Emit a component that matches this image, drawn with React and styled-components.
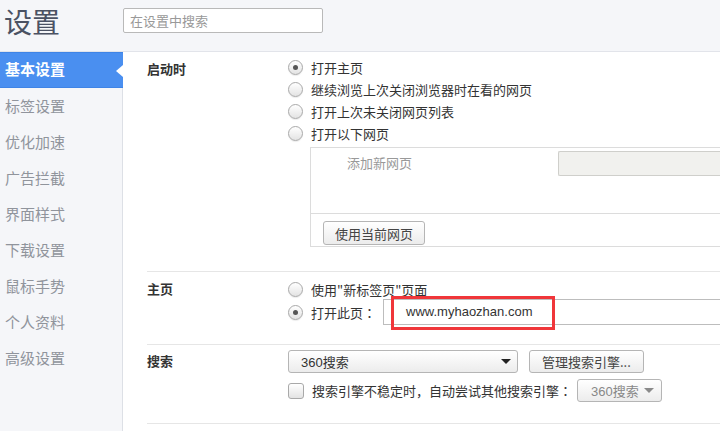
import React from "react";
import styled, { createGlobalStyle, css } from "styled-components";

const Global = createGlobalStyle`
  html, body { margin: 0; padding: 0; background: #fff; }
  body { font-family: "Noto Sans CJK SC", "Noto Sans", sans-serif; font-size: 13px; color: #333; }
  * { box-sizing: border-box; }
`;

const Page = styled.div`
  width: 720px;
  height: 431px;
  overflow: hidden;
  display: flex;
  flex-direction: column;
`;

const Header = styled.header`
  height: 52px;
  flex: none;
  background: #f5f6f9;
  border-bottom: 1px solid #e2e4ea;
  display: flex;
  align-items: flex-start;
`;

const Title = styled.h1`
  margin: 0;
  width: 123px;
  padding: 3px 0 0 4px;
  font-size: 28px;
  line-height: 36px;
  font-weight: 400;
  color: #4b5263;
`;

const Search = styled.input`
  margin-top: 8px;
  width: 200px;
  height: 25px;
  border: 1px solid #b9b9b9;
  border-radius: 2px;
  padding: 0 6px;
  font: inherit;
  font-size: 13px;
  background: #fff;
  outline: none;
  &::placeholder { color: #999; }
`;

const Body = styled.div`
  flex: 1;
  display: flex;
  min-height: 0;
`;

const Sidebar = styled.nav`
  width: 123px;
  flex: none;
  background: #f5f6f9;
  border-right: 1px solid #dde0e6;
  display: flex;
  flex-direction: column;
`;

const NavItem = styled.div`
  position: relative;
  height: 36px;
  line-height: 36px;
  padding-left: 5px;
  font-size: 15px;
  color: #90949c;
  ${(p) =>
    p.$active &&
    css`
      margin-right: -1px;
      background: #4a8ff0;
      border-top: 1px solid #3f84e6;
      border-bottom: 1px solid #3f84e6;
      line-height: 32px;
      color: #fff;
      font-weight: 700;
      &::after {
        content: "";
        position: absolute;
        right: 0;
        top: 12px;
        border-style: solid;
        border-width: 6px 7px 6px 0;
        border-color: transparent #fff transparent transparent;
      }
    `}
`;

const Content = styled.main`
  flex: 1;
  background: #fff;
  padding-left: 24px;
  min-width: 0;
  overflow: hidden;
`;

const Section = styled.section`
  display: grid;
  grid-template-columns: 141px 1fr;
  border-bottom: 1px solid #e6e6e6;
  padding: ${(p) => p.$pad};
`;

const Label = styled.div`
  font-weight: 700;
  font-size: 13px;
  color: #333;
  line-height: 20px;
  margin-top: ${(p) => p.$top || 0}px;
`;

const Options = styled.div`
  display: flex;
  flex-direction: column;
  gap: ${(p) => p.$gap || 0}px;
  min-width: 0;
`;

const OptionRow = styled.div`
  display: flex;
  align-items: center;
  height: ${(p) => p.$h || 22}px;
  white-space: nowrap;
  color: #333;
`;

const Radio = styled.span`
  width: 15px;
  height: 15px;
  flex: none;
  border-radius: 50%;
  border: 1px solid #a9a9a9;
  background: linear-gradient(#ffffff, #e3e3e3);
  box-shadow: 0 1px 1px rgba(0, 0, 0, 0.08);
  margin-right: 8px;
  display: flex;
  align-items: center;
  justify-content: center;
  &::after {
    content: "";
    width: 5px;
    height: 5px;
    border-radius: 50%;
    background: ${(p) => (p.$checked ? "#555" : "transparent")};
  }
`;

const Check = styled.span`
  width: 16px;
  height: 16px;
  flex: none;
  border-radius: 3px;
  border: 1px solid #a9a9a9;
  background: linear-gradient(#ffffff, #e3e3e3);
  margin-right: 8px;
`;

const Colon = styled.span`
  font-family: "Noto Sans CJK TC", "Noto Sans CJK SC", sans-serif;
`;

const PagesBox = styled.div`
  margin: 3px 0 0 22px;
  width: 420px;
  border: 1px solid #dcdcdc;
  border-right: none;
`;

const PagesTop = styled.div`
  height: 65px;
  display: grid;
  grid-template-columns: 247px 1fr;
  align-items: start;
  padding-top: 3px;
`;

const PagesHint = styled.div`
  padding-left: 36px;
  line-height: 24px;
  color: #999;
`;

const GreyInput = styled.div`
  height: 25px;
  background: #f1f1ee;
  border: 1px solid #cfcfcb;
  border-right: none;
  border-radius: 2px 0 0 2px;
`;

const PagesBottom = styled.div`
  border-top: 1px solid #dcdcdc;
  padding: 7px 12px 1px;
  height: 33px;
`;

const Button = styled.button`
  height: ${(p) => p.$h || 24}px;
  padding: 0 ${(p) => p.$px || 12}px;
  border: 1px solid #b5b5b5;
  border-radius: 3px;
  background: linear-gradient(#ffffff, #ececec);
  font: inherit;
  font-size: 13px;
  color: #444;
  white-space: nowrap;
  margin-left: ${(p) => p.$ml || 0}px;
  cursor: pointer;
`;

const UrlWrap = styled.div`
  position: relative;
  margin-left: 7px;
  flex: 1;
  height: 26px;
`;

const UrlInput = styled.div`
  height: 26px;
  border: 1px solid #bdbdbd;
  border-right: none;
  padding-left: 22px;
  line-height: 24px;
  font-family: "Liberation Sans", Arial, sans-serif;
  font-size: 13px;
  color: #333;
`;

const Highlight = styled.div`
  position: absolute;
  left: 8px;
  top: -3px;
  width: 164px;
  height: 34px;
  border: 3px solid #f0363a;
  pointer-events: none;
`;

const Select = styled.div`
  width: ${(p) => p.$w}px;
  height: ${(p) => p.$h || 23}px;
  border: 1px solid #b5b5b5;
  border-radius: 3px;
  background: linear-gradient(#ffffff, #ececec);
  display: flex;
  align-items: center;
  justify-content: space-between;
  padding: 0 ${(p) => p.$pr || 6}px 0 ${(p) => p.$pl || 12}px;
  color: ${(p) => (p.$muted ? "#888" : "#333")};
  margin-left: ${(p) => p.$ml || 0}px;
  white-space: nowrap;
`;

const Arrow = styled.span`
  width: 0;
  height: 0;
  border-style: solid;
  border-width: 5px 5px 0 5px;
  border-color: ${(p) => (p.$muted ? "#8a8a8a" : "#222")} transparent transparent transparent;
`;

const Num = styled.span`
  font-family: "Liberation Sans", Arial, sans-serif;
`;

const navItems = ["基本设置", "标签设置", "优化加速", "广告拦截", "界面样式", "下载设置", "鼠标手势", "个人资料", "高级设置"];

export default function App() {
  return (
    <Page>
      <Global />
      <Header>
        <Title>设置</Title>
        <Search placeholder="在设置中搜索" />
      </Header>
      <Body>
        <Sidebar>
          {navItems.map((t, i) => (
            <NavItem key={t} $active={i === 0}>
              {t}
            </NavItem>
          ))}
        </Sidebar>
        <Content>
          <Section $pad="4px 0 24px">
            <Label $top={3}>启动时</Label>
            <Options>
              <OptionRow>
                <Radio $checked />
                打开主页
              </OptionRow>
              <OptionRow>
                <Radio />
                继续浏览上次关闭浏览器时在看的网页
              </OptionRow>
              <OptionRow>
                <Radio />
                打开上次未关闭网页列表
              </OptionRow>
              <OptionRow>
                <Radio />
                打开以下网页
              </OptionRow>
              <PagesBox>
                <PagesTop>
                  <PagesHint>添加新网页</PagesHint>
                  <GreyInput />
                </PagesTop>
                <PagesBottom>
                  <Button $px={11}>使用当前网页</Button>
                </PagesBottom>
              </PagesBox>
            </Options>
          </Section>
          <Section $pad="7px 0 19px">
            <Label $top={0}>主页</Label>
            <Options>
              <OptionRow $h={20}>
                <Radio />
                使用"新标签页"页面
              </OptionRow>
              <OptionRow $h={26}>
                <Radio $checked />
                打开此页<Colon>：</Colon>
                <UrlWrap>
                  <UrlInput>www.myhaozhan.com</UrlInput>
                  <Highlight />
                </UrlWrap>
              </OptionRow>
            </Options>
          </Section>
          <Section $pad="5px 0 21px">
            <Label $top={1}>搜索</Label>
            <Options $gap={6}>
              <OptionRow $h={23}>
                <Select $w={230}>
                  <span>
                    <Num>360</Num>搜索
                  </span>
                  <Arrow />
                </Select>
                <Button $h={23} $ml={11} $px={12}>
                  管理搜索引擎...
                </Button>
              </OptionRow>
              <OptionRow $h={23}>
                <Check />
                搜索引擎不稳定时，自动尝试其他搜索引擎<Colon>：</Colon>
                <Select $w={85} $muted $ml={5} $pl={13} $pr={7}>
                  <span>
                    <Num>360</Num>搜索
                  </span>
                  <Arrow $muted />
                </Select>
              </OptionRow>
            </Options>
          </Section>
        </Content>
      </Body>
    </Page>
  );
}
